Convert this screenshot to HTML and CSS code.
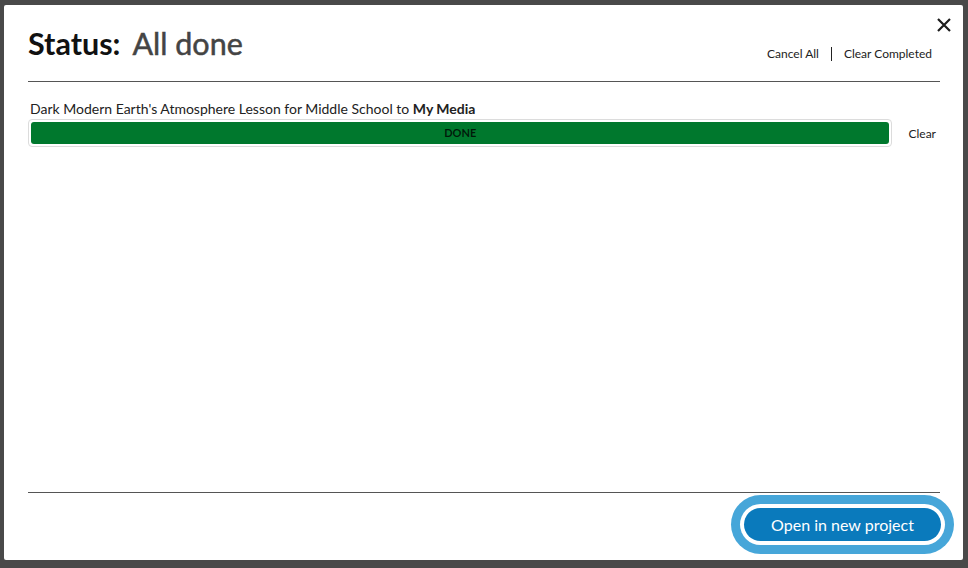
FILE: index.html
```html
<!DOCTYPE html>
<html lang="en">
<head>
    <meta charset="UTF-8">
    <meta name="viewport" content="width=device-width, initial-scale=1.0">
    <title>Status</title>
    <link rel="stylesheet" href="styles.css">
</head>
<body>
    <div class="modal">
        <span class="close" title="Close">
            <svg width="14" height="14" viewBox="0 0 14 14"><path d="M1 1L13 13M13 1L1 13" stroke="#1d1d1d" stroke-width="2.2" fill="none"/></svg>
        </span>
        <div class="modal-head">
            <h1 class="title"><span class="label">Status:</span><span class="state">All done</span></h1>
            <div class="actions">
                <a class="action">Cancel All</a>
                <a class="action sep">Clear Completed</a>
            </div>
        </div>
        <div class="uploads">
            <div class="upload">
                <div class="upload-name">Dark Modern Earth's Atmosphere Lesson for Middle School to <b>My Media</b></div>
                <div class="upload-row">
                    <div class="bar">
                        <div class="fill">DONE</div>
                    </div>
                    <a class="clear">Clear</a>
                </div>
            </div>
        </div>
        <div class="modal-foot">
            <button class="open-btn">Open in new project</button>
        </div>
    </div>
</body>
</html>
```

FILE: styles.css
```css
*{margin: 0; padding: 0; box-sizing: border-box;}
html, body{
    height: 100%;
}
body{
    background: #494949;
    font-family: Lato, "Liberation Sans", sans-serif;
    color: #222;
    overflow: hidden;
}
.modal{
    position: relative;
    width: 959px;
    height: 555px;
    margin: 5px 0 0 4px;
    background: #fff;
    border-radius: 2px;
    padding: 0 23px 0 24px;
    display: flex;
    flex-direction: column;
}
.close{
    position: absolute;
    top: 13px;
    right: 12px;
    width: 14px;
    height: 14px;
    cursor: pointer;
}
.close svg{
    display: block;
}
.modal-head{
    display: flex;
    align-items: flex-end;
    justify-content: space-between;
    padding-top: 20px;
    padding-bottom: 20px;
    border-bottom: 1px solid #555;
}
.title{
    display: flex;
    gap: 12px;
    font-size: 30.5px;
    line-height: 36px;
}
.title .label{
    font-weight: 700;
    color: #111;
}
.title .state{
    font-weight: 400;
    color: #444;
    -webkit-text-stroke: 0.5px #444;
}
.actions{
    display: flex;
    align-items: center;
    font-size: 12px;
    line-height: 14px;
    margin-right: 8px;
}
.action{
    padding: 0 12px;
    cursor: pointer;
}
.action.sep{
    border-left: 1px solid #222;
    padding-right: 0;
    padding-left: 12px;
}
.uploads{
    flex: 1;
    padding-top: 18px;
}
.upload-name{
    font-size: 14px;
    line-height: 17px;
    padding-left: 2px;
    margin-bottom: 2px;
}
.upload-name b{
    font-weight: 700;
}
.upload-row{
    display: flex;
    align-items: center;
}
.bar{
    flex: 1;
    border: 1px solid #dcdcdc;
    border-radius: 4px;
    padding: 2px;
}
.fill{
    height: 22px;
    background: #00782d;
    border-radius: 3px;
    text-align: center;
    font-size: 11px;
    font-weight: 700;
    line-height: 22px;
    color: rgba(0, 0, 0, 0.78);
}
.clear{
    font-size: 12px;
    margin-left: 16px;
    padding-right: 4px;
    cursor: pointer;
}
.modal-foot{
    border-top: 1px solid #555;
    display: flex;
    justify-content: flex-end;
    padding-top: 15px;
    padding-bottom: 19px;
}
.open-btn{
    width: 197px;
    height: 33px;
    margin-right: -1px;
    border: none;
    border-radius: 17px;
    background: #0a7abc;
    color: #fff;
    font-family: Lato, "Liberation Sans", sans-serif;
    font-size: 16px;
    cursor: pointer;
    box-shadow: 0 0 0 4px #fff, 0 0 0 13px #46a6d9;
}
```
